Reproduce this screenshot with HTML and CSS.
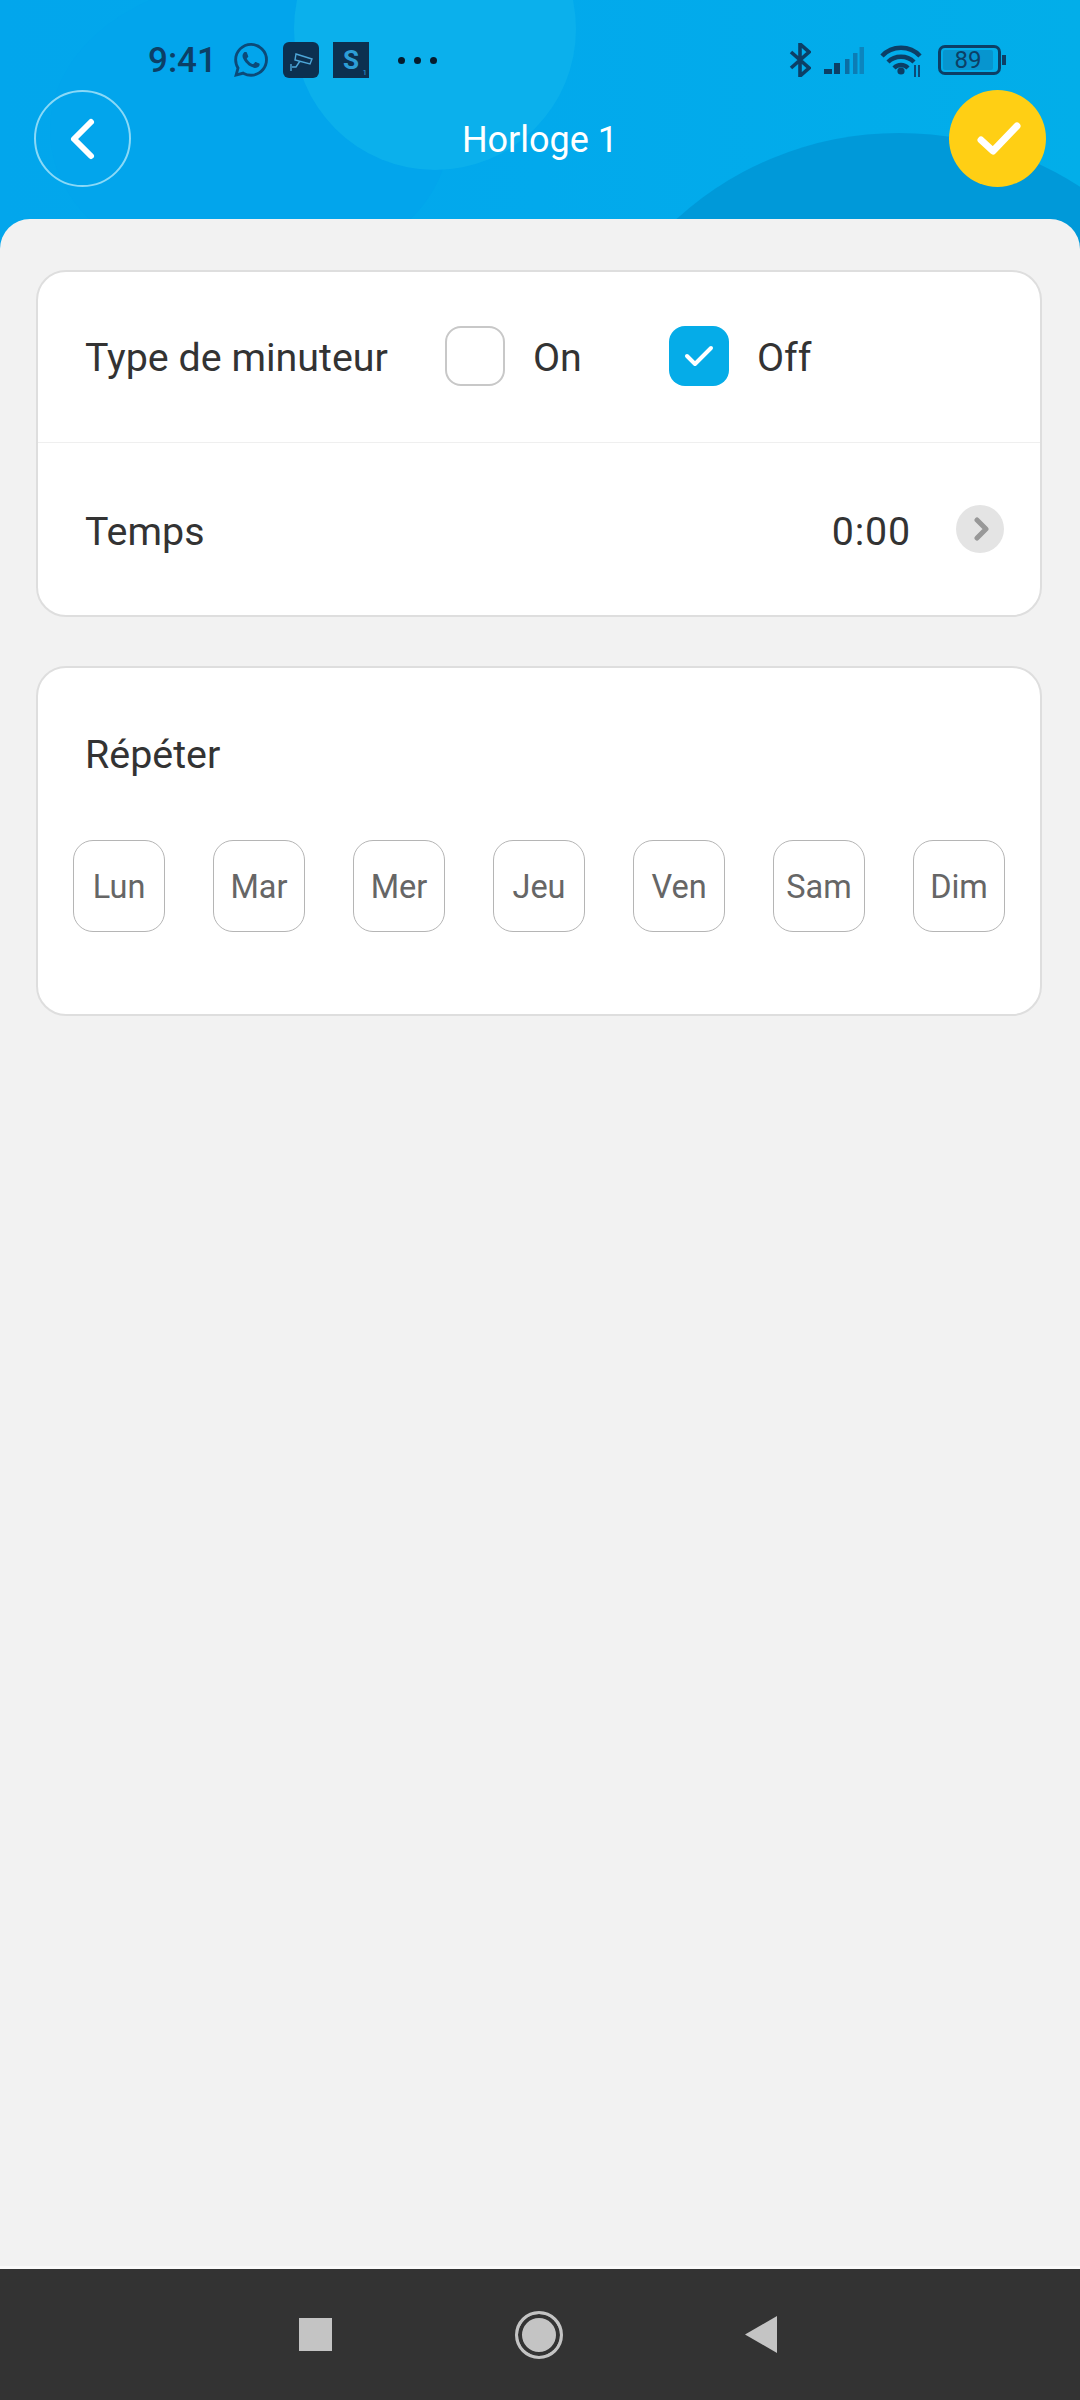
FILE: index.html

```html
<!DOCTYPE html>
<html lang="fr">
    <head>
        <meta charset="utf-8">
        <title>Horloge 1</title>
        <link rel="stylesheet" href="styles.css">
    </head>
    <body>
        <header class="header">
            <div class="blob blob-left"></div>
            <div class="blob blob-top"></div>
            <div class="blob blob-right"></div>

            <div class="status">
                <span class="time">9:41</span>
                <svg class="whatsapp" viewBox="0 0 24 24"><path fill="#0c4a78" d="M17.472 14.382c-.297-.149-1.758-.867-2.03-.967-.273-.099-.471-.148-.67.15-.197.297-.767.966-.94 1.164-.173.199-.347.223-.644.075-.297-.15-1.255-.463-2.39-1.475-.883-.788-1.48-1.761-1.653-2.059-.173-.297-.018-.458.13-.606.134-.133.298-.347.446-.52.149-.174.198-.298.298-.497.099-.198.05-.371-.025-.52-.075-.149-.669-1.612-.916-2.207-.242-.579-.487-.5-.669-.51-.173-.008-.371-.01-.57-.01-.198 0-.52.074-.792.372-.272.297-1.04 1.016-1.04 2.479 0 1.462 1.065 2.875 1.213 3.074.149.198 2.096 3.2 5.077 4.487.709.306 1.262.489 1.694.625.712.227 1.36.195 1.871.118.571-.085 1.758-.719 2.006-1.413.248-.694.248-1.289.173-1.413-.074-.124-.272-.198-.57-.347m-5.421 7.403h-.004a9.87 9.87 0 01-5.031-1.378l-.361-.214-3.741.982.998-3.648-.235-.374a9.86 9.86 0 01-1.51-5.26c.001-5.45 4.436-9.884 9.888-9.884 2.64 0 5.122 1.03 6.988 2.898a9.825 9.825 0 012.893 6.994c-.003 5.45-4.437 9.884-9.885 9.884m8.413-18.297A11.815 11.815 0 0012.05 0C5.495 0 .16 5.335.157 11.892c0 2.096.547 4.142 1.588 5.945L.057 24l6.305-1.654a11.882 11.882 0 005.683 1.448h.005c6.554 0 11.89-5.335 11.893-11.893a11.821 11.821 0 00-3.48-8.413z"/></svg>
                <svg class="tile" viewBox="0 0 36 36">
                    <rect width="36" height="36" rx="6" fill="#0c3050"/>
                    <path d="M13 12 L29 17 L27 22 L12 18 Z M17 19 L13 25 H9 M8 22 V29" fill="none" stroke="#4da6d8" stroke-width="1.4"/>
                </svg>
                <span class="tile-s">S<small>1</small></span>
                <span class="dots"><i></i><i></i><i></i></span>

                <div class="status-right">
                    <svg class="bluetooth" viewBox="0 0 22 34"><path d="M2 9 L20 25 L11 33 V1 L20 9 L2 25" fill="none" stroke="#0c3f66" stroke-width="3.6"/></svg>
                    <svg class="signal" viewBox="0 0 40 27">
                        <rect x="0" y="22" width="8" height="5" fill="#0c3f66"/>
                        <rect x="10" y="16" width="6" height="11" fill="#0c3f66"/>
                        <rect x="21" y="12" width="4.5" height="15" fill="#0c6ea3"/>
                        <rect x="29" y="6" width="4.5" height="21" fill="#0c7db5"/>
                        <rect x="35.5" y="0" width="4.5" height="27" fill="#0c85be"/>
                    </svg>
                    <svg class="wifi" viewBox="0 0 42 34">
                        <path d="M2 13 C12 2 30 2 40 13 M8 19 C15 12 27 12 34 19 M14 25 C18 21 24 21 28 25" fill="none" stroke="#0c3f66" stroke-width="4.4"/>
                        <circle cx="21" cy="28" r="3.6" fill="#0c3f66"/>
                        <path d="M35 22 V34 M39 22 V34" stroke="#0c4a78" stroke-width="2"/>
                    </svg>
                    <div class="battery">
                        <div class="battery-body"><span class="battery-fill">89</span></div>
                        <div class="battery-cap"></div>
                    </div>
                </div>
            </div>

            <div class="toolbar">
                <button class="round back">
                    <svg viewBox="0 0 30 44"><path d="M24 5 L7 22 L24 39" fill="none" stroke="#fff" stroke-width="6" stroke-linecap="round" stroke-linejoin="round"/></svg>
                </button>
                <h1 class="title">Horloge 1</h1>
                <button class="round confirm">
                    <svg viewBox="0 0 44 34"><path d="M4 18 L16 29 L40 4" fill="none" stroke="#fff" stroke-width="7" stroke-linecap="round" stroke-linejoin="round"/></svg>
                </button>
            </div>
        </header>

        <main class="sheet">
            <section class="card">
                <div class="row row-type">
                    <span class="label type-label">Type de minuteur</span>
                    <span class="check"></span>
                    <span class="label option on-label">On</span>
                    <span class="check checked">
                        <svg viewBox="0 0 30 24"><path d="M3 12 L11 20 L27 4" fill="none" stroke="#fff" stroke-width="4" stroke-linecap="round" stroke-linejoin="round"/></svg>
                    </span>
                    <span class="label option">Off</span>
                </div>
                <div class="row row-time">
                    <span class="label time-text">Temps</span>
                    <span class="label time-text value">0:00</span>
                    <span class="arrow">
                        <svg viewBox="0 0 16 24"><path d="M3 3 L12 12 L3 21" fill="none" stroke="#989898" stroke-width="5" stroke-linecap="round" stroke-linejoin="round"/></svg>
                    </span>
                </div>
            </section>

            <section class="card repeat">
                <div class="label repeat-title">Répéter</div>
                <div class="days">
                    <button class="day">Lun</button>
                    <button class="day">Mar</button>
                    <button class="day">Mer</button>
                    <button class="day">Jeu</button>
                    <button class="day">Ven</button>
                    <button class="day">Sam</button>
                    <button class="day">Dim</button>
                </div>
            </section>
        </main>

        <nav class="navbar">
            <span class="nav-square"></span>
            <span class="nav-circle"></span>
            <svg class="nav-back" viewBox="0 0 32 37"><path d="M32 0 V37 L0 18.5 Z" fill="#c4c4c4"/></svg>
        </nav>
    </body>
</html>
```

FILE: styles.css

```css
html, body {
    margin: 0;
    height: 100%;
}

body {
    display: flex;
    flex-direction: column;
    height: 2400px;
    overflow: hidden;
    background: #f2f2f2;
    font-family: Roboto, sans-serif;
}

button {
    padding: 0;
    font-family: inherit;
}

/* header */
.header {
    position: relative;
    height: 251px;
    flex: none;
    overflow: hidden;
    background: linear-gradient(90deg, #02a6ec 0%, #02a9ec 50%, #02aee9 100%);
}

.blob {
    position: absolute;
    border-radius: 50%;
}

.blob-left {
    left: 50px;
    top: -20px;
    width: 400px;
    height: 300px;
    background: #02a5ec;
}

.blob-top {
    left: 294px;
    top: -112px;
    width: 282px;
    height: 282px;
    background: #0bb0ec;
}

.blob-right {
    left: 568px;
    top: 133px;
    width: 662px;
    height: 662px;
    background: #0099d9;
}

.status {
    position: relative;
    display: flex;
    align-items: center;
    height: 36px;
    padding: 42px 0 0 148px;
}

.time {
    font-size: 35px;
    font-weight: 500;
    color: #0c3f66;
    width: 86px;
}

.whatsapp {
    width: 34px;
    height: 34px;
    margin-right: 15px;
}

.tile {
    width: 36px;
    height: 36px;
    margin-right: 14px;
}

.tile-s {
    position: relative;
    width: 36px;
    height: 36px;
    background: #0c3050;
    color: #2d9ed6;
    font-size: 26px;
    font-weight: 700;
    line-height: 36px;
    text-align: center;
}

.tile-s small {
    position: absolute;
    right: 2px;
    bottom: 0;
    font-size: 8px;
    line-height: 10px;
    font-weight: 400;
}

.dots {
    display: flex;
    gap: 9px;
    margin-left: 29px;
}

.dots i {
    width: 7px;
    height: 7px;
    border-radius: 50%;
    background: #051c2e;
}

.status-right {
    display: flex;
    align-items: center;
    margin-left: 352px;
}

.bluetooth {
    width: 22px;
    height: 34px;
}

.signal {
    width: 40px;
    height: 27px;
    margin-left: 13px;
}

.wifi {
    width: 42px;
    height: 34px;
    margin-left: 16px;
}

.battery {
    display: flex;
    align-items: center;
    margin-left: 16px;
}

.battery-body {
    box-sizing: border-box;
    width: 63px;
    height: 30px;
    padding: 2px;
    border: 3px solid #0c3f66;
    border-radius: 7px;
}

.battery-fill {
    display: block;
    width: 50px;
    height: 20px;
    border-radius: 2px;
    background: #0795cf;
    color: #0c3f66;
    font-size: 24px;
    line-height: 20px;
    text-align: center;
}

.battery-cap {
    width: 4px;
    height: 10px;
    margin-left: 1px;
    background: #0c3f66;
}

.toolbar {
    position: relative;
    display: flex;
    align-items: center;
    justify-content: space-between;
    margin-top: 12px;
    padding: 0 34px;
}

.round {
    box-sizing: border-box;
    display: flex;
    align-items: center;
    justify-content: center;
    width: 97px;
    height: 97px;
    border: none;
    border-radius: 50%;
}

.back {
    background: transparent;
    border: 2px solid #8ad9f7;
}

.back svg {
    width: 30px;
    height: 44px;
    margin-right: 2px;
}

.confirm {
    background: #ffcf14;
}

.confirm svg {
    width: 44px;
    height: 34px;
    margin-left: 3px;
}

.title {
    margin: 0;
    padding-top: 2px;
    font-size: 36px;
    font-weight: 400;
    color: #fff;
}

/* content */
.sheet {
    position: relative;
    flex: 1;
    margin-top: -32px;
    padding-top: 51px;
    border-radius: 30px 30px 0 0;
    background: #f2f2f2;
}

.card {
    box-sizing: border-box;
    width: 1006px;
    margin-left: 36px;
    border: 2px solid #dedede;
    border-radius: 30px;
    background: #fff;
}

.repeat {
    height: 350px;
    margin-top: 49px;
}

.row {
    display: flex;
    align-items: center;
    height: 172px;
    padding: 0 36px 0 47px;
}

.row-type {
    height: 170px;
}

.row-time {
    border-top: 1px solid #efefef;
}

.label {
    font-size: 39.4px;
    color: #333;
}

.row-type .label {
    padding-top: 1px;
}

.time-text {
    padding-top: 4px;
}

.type-label {
    width: 360px;
    flex: none;
}

.check {
    box-sizing: border-box;
    display: flex;
    align-items: center;
    justify-content: center;
    width: 60px;
    height: 60px;
    flex: none;
    margin-bottom: 2px;
    border: 2px solid #c8c8c8;
    border-radius: 16px;
}

.checked {
    background: #05ace8;
    border: none;
}

.checked svg {
    width: 30px;
    height: 24px;
}

.option {
    margin-left: 28px;
}

.on-label {
    width: 136px;
}

.value {
    margin-left: auto;
    letter-spacing: 0.8px;
}

.arrow {
    display: flex;
    align-items: center;
    justify-content: center;
    width: 48px;
    height: 48px;
    margin-left: 45px;
    border-radius: 50%;
    background: #e4e4e4;
}

.arrow svg {
    width: 16px;
    height: 24px;
    margin-left: 3px;
}

.repeat-title {
    padding: 62px 0 0 47px;
    line-height: 50px;
}

.days {
    display: flex;
    gap: 48px;
    margin-top: 60px;
    padding-left: 35px;
}

.day {
    box-sizing: border-box;
    width: 92px;
    height: 92px;
    padding-top: 2px;
    border: 1px solid #b5b5b5;
    border-radius: 20px;
    background: #fff;
    font-size: 32.5px;
    color: #666;
}

/* system bar */
.navbar {
    display: flex;
    align-items: center;
    height: 131px;
    flex: none;
    padding-left: 299px;
    background: #333;
    box-shadow: 0 -3px 0 #fafafa;
    position: relative;
}

.nav-square {
    width: 33px;
    height: 33px;
    background: #c4c4c4;
}

.nav-circle {
    box-sizing: border-box;
    width: 48px;
    height: 48px;
    margin-left: 183px;
    border: 3px solid #c4c4c4;
    border-radius: 50%;
    background: #c4c4c4;
    box-shadow: inset 0 0 0 4px #333;
}

.nav-back {
    width: 32px;
    height: 37px;
    margin-left: 182px;
}
```
